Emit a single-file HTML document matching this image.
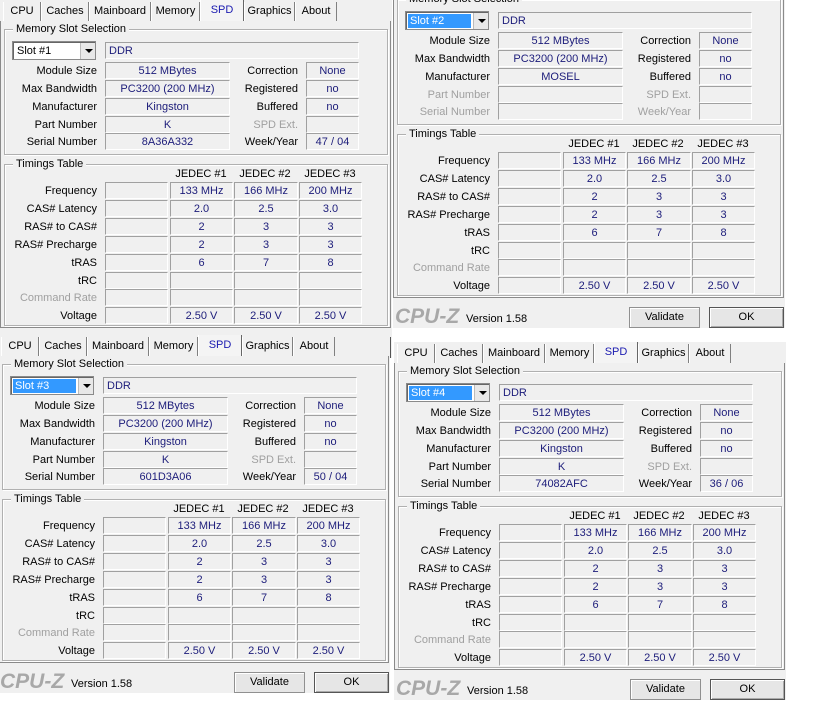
<!DOCTYPE html>
<html><head><meta charset="utf-8">
<style>
*{box-sizing:border-box;margin:0;padding:0}
html,body{width:816px;height:724px;overflow:hidden;background:#fff;font-family:"Liberation Sans",sans-serif;font-size:11px;color:#000}
.p{position:absolute;width:392px;height:358px;background:#f0f0f0}
.p div,.p span{position:absolute}
.tb{left:0;top:0;width:392px;height:21px;background:#f0f0f0}
.t{top:2px;height:19px;line-height:19px;border-left:1px solid #fff;border-right:1px solid #808080;text-align:center;background:#f0f0f0}
.t.s{top:0;height:21px;color:#1a1ab0;background:#f4f4f4;border-left:1px solid #fff;border-right:1px solid #666;line-height:20px}
.frame{left:0;top:20px;width:391px;height:308px;border:1px solid #8a8a8a;border-top:1px solid #fff}
.g{left:4px;width:384px;border:1px solid #b0b0b0;box-shadow:inset 1px 1px 0 #fff,1px 1px 0 #fff}
.gt{left:8px;top:-8px;background:#f0f0f0;padding:0 3px;line-height:15px}
.l{left:0;width:97px;text-align:right;line-height:18px}
.r{left:200px;width:98px;text-align:right;line-height:18px}
.gr{color:#a0a0a0}
.b{height:17px;border-top:1px solid #a0a0a0;border-left:1px solid #a0a0a0;border-bottom:1px solid #fff;border-right:1px solid #fff;text-align:center;color:#1c1c7a;line-height:16px}
.sel{left:12px;top:41px;width:84px;height:19px;border:1px solid #8a8a8a;background:#fff;box-shadow:inset 1px 1px 0 #666}
.sel .v{left:2px;top:2px;width:63px;height:14px;line-height:15px;padding-left:2px}
.sel .v.h{background:#3399ff;color:#fff}
.sel .dd{left:67px;top:1px;width:15px;height:16px;background:#e8e8e8;border-left:1px solid #bbb}
.sel .dd i{position:absolute;left:4px;top:6px;width:0;height:0;border-left:4px solid transparent;border-right:4px solid transparent;border-top:4px solid #000}
.jh{top:167px;width:64px;text-align:center;line-height:14px}
.btn{top:337px;height:21px;border:1px solid #909090;background:#e6e6e6;text-align:center;line-height:18px;box-shadow:inset 1px 1px 0 #fff}
.ok{border:1px solid #555;box-shadow:inset 1px 1px 0 #fff,inset -1px -1px 0 #aaa}
.logo{left:2px;top:335px;font-size:21px;font-weight:bold;font-style:italic;color:#a8a8a8;line-height:24px}
.ver{left:73px;top:342px;line-height:14px}
</style></head><body>

<!-- PANEL 1 -->
<div class="p" style="left:0;top:0">
<div class="frame"></div>
<div class="tb">
<div class="t" style="left:3px;width:38px">CPU</div>
<div class="t" style="left:41px;width:48px">Caches</div>
<div class="t" style="left:89px;width:62px">Mainboard</div>
<div class="t" style="left:151px;width:49px">Memory</div>
<div class="t s" style="left:200px;width:44px">SPD</div>
<div class="t" style="left:244px;width:51px">Graphics</div>
<div class="t" style="left:295px;width:42px">About</div>
</div>
<div class="g" style="top:29px;height:126px"><span class="gt">Memory Slot Selection</span></div>
<div class="sel"><div class="v">Slot #1</div><div class="dd"><i></i></div></div>
<div class="b" style="left:105px;top:42px;width:254px;text-align:left;padding-left:3px">DDR</div>
<span class="l" style="top:62px">Module Size</span><div class="b" style="left:105px;top:62px;width:125px">512 MBytes</div>
<span class="l" style="top:80px">Max Bandwidth</span><div class="b" style="left:105px;top:80px;width:125px">PC3200 (200 MHz)</div>
<span class="l" style="top:98px">Manufacturer</span><div class="b" style="left:105px;top:98px;width:125px">Kingston</div>
<span class="l" style="top:116px">Part Number</span><div class="b" style="left:105px;top:116px;width:125px">K</div>
<span class="l" style="top:133px">Serial Number</span><div class="b" style="left:105px;top:133px;width:125px">8A36A332</div>
<span class="r" style="top:62px">Correction</span><div class="b" style="left:306px;top:62px;width:53px">None</div>
<span class="r" style="top:80px">Registered</span><div class="b" style="left:306px;top:80px;width:53px">no</div>
<span class="r" style="top:98px">Buffered</span><div class="b" style="left:306px;top:98px;width:53px">no</div>
<span class="r gr" style="top:116px">SPD Ext.</span><div class="b" style="left:306px;top:116px;width:53px"></div>
<span class="r" style="top:133px">Week/Year</span><div class="b" style="left:306px;top:133px;width:53px">47 / 04</div>
<div class="g" style="top:164px;height:162px"><span class="gt">Timings Table</span></div>
<span class="jh" style="left:169px">JEDEC #1</span><span class="jh" style="left:233px">JEDEC #2</span><span class="jh" style="left:298px">JEDEC #3</span>
<span class="l" style="top:182px">Frequency</span><div class="b" style="left:105px;top:182px;width:63px"></div><div class="b" style="left:170px;top:182px;width:63px">133 MHz</div><div class="b" style="left:234px;top:182px;width:64px">166 MHz</div><div class="b" style="left:299px;top:182px;width:63px">200 MHz</div>
<span class="l" style="top:200px">CAS# Latency</span><div class="b" style="left:105px;top:200px;width:63px"></div><div class="b" style="left:170px;top:200px;width:63px">2.0</div><div class="b" style="left:234px;top:200px;width:64px">2.5</div><div class="b" style="left:299px;top:200px;width:63px">3.0</div>
<span class="l" style="top:218px">RAS# to CAS#</span><div class="b" style="left:105px;top:218px;width:63px"></div><div class="b" style="left:170px;top:218px;width:63px">2</div><div class="b" style="left:234px;top:218px;width:64px">3</div><div class="b" style="left:299px;top:218px;width:63px">3</div>
<span class="l" style="top:236px">RAS# Precharge</span><div class="b" style="left:105px;top:236px;width:63px"></div><div class="b" style="left:170px;top:236px;width:63px">2</div><div class="b" style="left:234px;top:236px;width:64px">3</div><div class="b" style="left:299px;top:236px;width:63px">3</div>
<span class="l" style="top:254px">tRAS</span><div class="b" style="left:105px;top:254px;width:63px"></div><div class="b" style="left:170px;top:254px;width:63px">6</div><div class="b" style="left:234px;top:254px;width:64px">7</div><div class="b" style="left:299px;top:254px;width:63px">8</div>
<span class="l" style="top:272px">tRC</span><div class="b" style="left:105px;top:272px;width:63px"></div><div class="b" style="left:170px;top:272px;width:63px"></div><div class="b" style="left:234px;top:272px;width:64px"></div><div class="b" style="left:299px;top:272px;width:63px"></div>
<span class="l gr" style="top:289px">Command Rate</span><div class="b" style="left:105px;top:289px;width:63px"></div><div class="b" style="left:170px;top:289px;width:63px"></div><div class="b" style="left:234px;top:289px;width:64px"></div><div class="b" style="left:299px;top:289px;width:63px"></div>
<span class="l" style="top:307px">Voltage</span><div class="b" style="left:105px;top:307px;width:63px"></div><div class="b" style="left:170px;top:307px;width:63px">2.50 V</div><div class="b" style="left:234px;top:307px;width:64px">2.50 V</div><div class="b" style="left:299px;top:307px;width:63px">2.50 V</div>
<span class="logo">CPU-Z</span><span class="ver">Version 1.58</span>
<div class="btn" style="left:236px;width:71px">Validate</div><div class="btn ok" style="left:316px;width:75px">OK</div>
</div>

<!-- PANEL 2 -->
<div class="p" style="left:393px;top:-30px">
<div class="frame"></div>
<div class="tb">
<div class="t" style="left:3px;width:38px">CPU</div>
<div class="t" style="left:41px;width:48px">Caches</div>
<div class="t" style="left:89px;width:62px">Mainboard</div>
<div class="t" style="left:151px;width:49px">Memory</div>
<div class="t s" style="left:200px;width:44px">SPD</div>
<div class="t" style="left:244px;width:51px">Graphics</div>
<div class="t" style="left:295px;width:42px">About</div>
</div>
<div class="g" style="top:29px;height:126px"><span class="gt">Memory Slot Selection</span></div>
<div class="sel"><div class="v h">Slot #2</div><div class="dd"><i></i></div></div>
<div class="b" style="left:105px;top:42px;width:254px;text-align:left;padding-left:3px">DDR</div>
<span class="l" style="top:62px">Module Size</span><div class="b" style="left:105px;top:62px;width:125px">512 MBytes</div>
<span class="l" style="top:80px">Max Bandwidth</span><div class="b" style="left:105px;top:80px;width:125px">PC3200 (200 MHz)</div>
<span class="l" style="top:98px">Manufacturer</span><div class="b" style="left:105px;top:98px;width:125px">MOSEL</div>
<span class="l gr" style="top:116px">Part Number</span><div class="b" style="left:105px;top:116px;width:125px"></div>
<span class="l gr" style="top:133px">Serial Number</span><div class="b" style="left:105px;top:133px;width:125px"></div>
<span class="r" style="top:62px">Correction</span><div class="b" style="left:306px;top:62px;width:53px">None</div>
<span class="r" style="top:80px">Registered</span><div class="b" style="left:306px;top:80px;width:53px">no</div>
<span class="r" style="top:98px">Buffered</span><div class="b" style="left:306px;top:98px;width:53px">no</div>
<span class="r gr" style="top:116px">SPD Ext.</span><div class="b" style="left:306px;top:116px;width:53px"></div>
<span class="r gr" style="top:133px">Week/Year</span><div class="b" style="left:306px;top:133px;width:53px"></div>
<div class="g" style="top:164px;height:162px"><span class="gt">Timings Table</span></div>
<span class="jh" style="left:169px">JEDEC #1</span><span class="jh" style="left:233px">JEDEC #2</span><span class="jh" style="left:298px">JEDEC #3</span>
<span class="l" style="top:182px">Frequency</span><div class="b" style="left:105px;top:182px;width:63px"></div><div class="b" style="left:170px;top:182px;width:63px">133 MHz</div><div class="b" style="left:234px;top:182px;width:64px">166 MHz</div><div class="b" style="left:299px;top:182px;width:63px">200 MHz</div>
<span class="l" style="top:200px">CAS# Latency</span><div class="b" style="left:105px;top:200px;width:63px"></div><div class="b" style="left:170px;top:200px;width:63px">2.0</div><div class="b" style="left:234px;top:200px;width:64px">2.5</div><div class="b" style="left:299px;top:200px;width:63px">3.0</div>
<span class="l" style="top:218px">RAS# to CAS#</span><div class="b" style="left:105px;top:218px;width:63px"></div><div class="b" style="left:170px;top:218px;width:63px">2</div><div class="b" style="left:234px;top:218px;width:64px">3</div><div class="b" style="left:299px;top:218px;width:63px">3</div>
<span class="l" style="top:236px">RAS# Precharge</span><div class="b" style="left:105px;top:236px;width:63px"></div><div class="b" style="left:170px;top:236px;width:63px">2</div><div class="b" style="left:234px;top:236px;width:64px">3</div><div class="b" style="left:299px;top:236px;width:63px">3</div>
<span class="l" style="top:254px">tRAS</span><div class="b" style="left:105px;top:254px;width:63px"></div><div class="b" style="left:170px;top:254px;width:63px">6</div><div class="b" style="left:234px;top:254px;width:64px">7</div><div class="b" style="left:299px;top:254px;width:63px">8</div>
<span class="l" style="top:272px">tRC</span><div class="b" style="left:105px;top:272px;width:63px"></div><div class="b" style="left:170px;top:272px;width:63px"></div><div class="b" style="left:234px;top:272px;width:64px"></div><div class="b" style="left:299px;top:272px;width:63px"></div>
<span class="l gr" style="top:289px">Command Rate</span><div class="b" style="left:105px;top:289px;width:63px"></div><div class="b" style="left:170px;top:289px;width:63px"></div><div class="b" style="left:234px;top:289px;width:64px"></div><div class="b" style="left:299px;top:289px;width:63px"></div>
<span class="l" style="top:307px">Voltage</span><div class="b" style="left:105px;top:307px;width:63px"></div><div class="b" style="left:170px;top:307px;width:63px">2.50 V</div><div class="b" style="left:234px;top:307px;width:64px">2.50 V</div><div class="b" style="left:299px;top:307px;width:63px">2.50 V</div>
<span class="logo">CPU-Z</span><span class="ver">Version 1.58</span>
<div class="btn" style="left:236px;width:71px">Validate</div><div class="btn ok" style="left:316px;width:75px">OK</div>
</div>

<!-- PANEL 3 -->
<div class="p" style="left:-2px;top:335px">
<div class="frame"></div>
<div class="tb">
<div class="t" style="left:3px;width:38px">CPU</div>
<div class="t" style="left:41px;width:48px">Caches</div>
<div class="t" style="left:89px;width:62px">Mainboard</div>
<div class="t" style="left:151px;width:49px">Memory</div>
<div class="t s" style="left:200px;width:44px">SPD</div>
<div class="t" style="left:244px;width:51px">Graphics</div>
<div class="t" style="left:295px;width:42px">About</div>
</div>
<div class="g" style="top:29px;height:126px"><span class="gt">Memory Slot Selection</span></div>
<div class="sel"><div class="v h">Slot #3</div><div class="dd"><i></i></div></div>
<div class="b" style="left:105px;top:42px;width:254px;text-align:left;padding-left:3px">DDR</div>
<span class="l" style="top:62px">Module Size</span><div class="b" style="left:105px;top:62px;width:125px">512 MBytes</div>
<span class="l" style="top:80px">Max Bandwidth</span><div class="b" style="left:105px;top:80px;width:125px">PC3200 (200 MHz)</div>
<span class="l" style="top:98px">Manufacturer</span><div class="b" style="left:105px;top:98px;width:125px">Kingston</div>
<span class="l" style="top:116px">Part Number</span><div class="b" style="left:105px;top:116px;width:125px">K</div>
<span class="l" style="top:133px">Serial Number</span><div class="b" style="left:105px;top:133px;width:125px">601D3A06</div>
<span class="r" style="top:62px">Correction</span><div class="b" style="left:306px;top:62px;width:53px">None</div>
<span class="r" style="top:80px">Registered</span><div class="b" style="left:306px;top:80px;width:53px">no</div>
<span class="r" style="top:98px">Buffered</span><div class="b" style="left:306px;top:98px;width:53px">no</div>
<span class="r gr" style="top:116px">SPD Ext.</span><div class="b" style="left:306px;top:116px;width:53px"></div>
<span class="r" style="top:133px">Week/Year</span><div class="b" style="left:306px;top:133px;width:53px">50 / 04</div>
<div class="g" style="top:164px;height:162px"><span class="gt">Timings Table</span></div>
<span class="jh" style="left:169px">JEDEC #1</span><span class="jh" style="left:233px">JEDEC #2</span><span class="jh" style="left:298px">JEDEC #3</span>
<span class="l" style="top:182px">Frequency</span><div class="b" style="left:105px;top:182px;width:63px"></div><div class="b" style="left:170px;top:182px;width:63px">133 MHz</div><div class="b" style="left:234px;top:182px;width:64px">166 MHz</div><div class="b" style="left:299px;top:182px;width:63px">200 MHz</div>
<span class="l" style="top:200px">CAS# Latency</span><div class="b" style="left:105px;top:200px;width:63px"></div><div class="b" style="left:170px;top:200px;width:63px">2.0</div><div class="b" style="left:234px;top:200px;width:64px">2.5</div><div class="b" style="left:299px;top:200px;width:63px">3.0</div>
<span class="l" style="top:218px">RAS# to CAS#</span><div class="b" style="left:105px;top:218px;width:63px"></div><div class="b" style="left:170px;top:218px;width:63px">2</div><div class="b" style="left:234px;top:218px;width:64px">3</div><div class="b" style="left:299px;top:218px;width:63px">3</div>
<span class="l" style="top:236px">RAS# Precharge</span><div class="b" style="left:105px;top:236px;width:63px"></div><div class="b" style="left:170px;top:236px;width:63px">2</div><div class="b" style="left:234px;top:236px;width:64px">3</div><div class="b" style="left:299px;top:236px;width:63px">3</div>
<span class="l" style="top:254px">tRAS</span><div class="b" style="left:105px;top:254px;width:63px"></div><div class="b" style="left:170px;top:254px;width:63px">6</div><div class="b" style="left:234px;top:254px;width:64px">7</div><div class="b" style="left:299px;top:254px;width:63px">8</div>
<span class="l" style="top:272px">tRC</span><div class="b" style="left:105px;top:272px;width:63px"></div><div class="b" style="left:170px;top:272px;width:63px"></div><div class="b" style="left:234px;top:272px;width:64px"></div><div class="b" style="left:299px;top:272px;width:63px"></div>
<span class="l gr" style="top:289px">Command Rate</span><div class="b" style="left:105px;top:289px;width:63px"></div><div class="b" style="left:170px;top:289px;width:63px"></div><div class="b" style="left:234px;top:289px;width:64px"></div><div class="b" style="left:299px;top:289px;width:63px"></div>
<span class="l" style="top:307px">Voltage</span><div class="b" style="left:105px;top:307px;width:63px"></div><div class="b" style="left:170px;top:307px;width:63px">2.50 V</div><div class="b" style="left:234px;top:307px;width:64px">2.50 V</div><div class="b" style="left:299px;top:307px;width:63px">2.50 V</div>
<span class="logo">CPU-Z</span><span class="ver">Version 1.58</span>
<div class="btn" style="left:236px;width:71px">Validate</div><div class="btn ok" style="left:316px;width:75px">OK</div>
</div>

<!-- PANEL 4 -->
<div class="p" style="left:394px;top:342px">
<div class="frame"></div>
<div class="tb">
<div class="t" style="left:3px;width:38px">CPU</div>
<div class="t" style="left:41px;width:48px">Caches</div>
<div class="t" style="left:89px;width:62px">Mainboard</div>
<div class="t" style="left:151px;width:49px">Memory</div>
<div class="t s" style="left:200px;width:44px">SPD</div>
<div class="t" style="left:244px;width:51px">Graphics</div>
<div class="t" style="left:295px;width:42px">About</div>
</div>
<div class="g" style="top:29px;height:126px"><span class="gt">Memory Slot Selection</span></div>
<div class="sel"><div class="v h">Slot #4</div><div class="dd"><i></i></div></div>
<div class="b" style="left:105px;top:42px;width:254px;text-align:left;padding-left:3px">DDR</div>
<span class="l" style="top:62px">Module Size</span><div class="b" style="left:105px;top:62px;width:125px">512 MBytes</div>
<span class="l" style="top:80px">Max Bandwidth</span><div class="b" style="left:105px;top:80px;width:125px">PC3200 (200 MHz)</div>
<span class="l" style="top:98px">Manufacturer</span><div class="b" style="left:105px;top:98px;width:125px">Kingston</div>
<span class="l" style="top:116px">Part Number</span><div class="b" style="left:105px;top:116px;width:125px">K</div>
<span class="l" style="top:133px">Serial Number</span><div class="b" style="left:105px;top:133px;width:125px">74082AFC</div>
<span class="r" style="top:62px">Correction</span><div class="b" style="left:306px;top:62px;width:53px">None</div>
<span class="r" style="top:80px">Registered</span><div class="b" style="left:306px;top:80px;width:53px">no</div>
<span class="r" style="top:98px">Buffered</span><div class="b" style="left:306px;top:98px;width:53px">no</div>
<span class="r gr" style="top:116px">SPD Ext.</span><div class="b" style="left:306px;top:116px;width:53px"></div>
<span class="r" style="top:133px">Week/Year</span><div class="b" style="left:306px;top:133px;width:53px">36 / 06</div>
<div class="g" style="top:164px;height:162px"><span class="gt">Timings Table</span></div>
<span class="jh" style="left:169px">JEDEC #1</span><span class="jh" style="left:233px">JEDEC #2</span><span class="jh" style="left:298px">JEDEC #3</span>
<span class="l" style="top:182px">Frequency</span><div class="b" style="left:105px;top:182px;width:63px"></div><div class="b" style="left:170px;top:182px;width:63px">133 MHz</div><div class="b" style="left:234px;top:182px;width:64px">166 MHz</div><div class="b" style="left:299px;top:182px;width:63px">200 MHz</div>
<span class="l" style="top:200px">CAS# Latency</span><div class="b" style="left:105px;top:200px;width:63px"></div><div class="b" style="left:170px;top:200px;width:63px">2.0</div><div class="b" style="left:234px;top:200px;width:64px">2.5</div><div class="b" style="left:299px;top:200px;width:63px">3.0</div>
<span class="l" style="top:218px">RAS# to CAS#</span><div class="b" style="left:105px;top:218px;width:63px"></div><div class="b" style="left:170px;top:218px;width:63px">2</div><div class="b" style="left:234px;top:218px;width:64px">3</div><div class="b" style="left:299px;top:218px;width:63px">3</div>
<span class="l" style="top:236px">RAS# Precharge</span><div class="b" style="left:105px;top:236px;width:63px"></div><div class="b" style="left:170px;top:236px;width:63px">2</div><div class="b" style="left:234px;top:236px;width:64px">3</div><div class="b" style="left:299px;top:236px;width:63px">3</div>
<span class="l" style="top:254px">tRAS</span><div class="b" style="left:105px;top:254px;width:63px"></div><div class="b" style="left:170px;top:254px;width:63px">6</div><div class="b" style="left:234px;top:254px;width:64px">7</div><div class="b" style="left:299px;top:254px;width:63px">8</div>
<span class="l" style="top:272px">tRC</span><div class="b" style="left:105px;top:272px;width:63px"></div><div class="b" style="left:170px;top:272px;width:63px"></div><div class="b" style="left:234px;top:272px;width:64px"></div><div class="b" style="left:299px;top:272px;width:63px"></div>
<span class="l gr" style="top:289px">Command Rate</span><div class="b" style="left:105px;top:289px;width:63px"></div><div class="b" style="left:170px;top:289px;width:63px"></div><div class="b" style="left:234px;top:289px;width:64px"></div><div class="b" style="left:299px;top:289px;width:63px"></div>
<span class="l" style="top:307px">Voltage</span><div class="b" style="left:105px;top:307px;width:63px"></div><div class="b" style="left:170px;top:307px;width:63px">2.50 V</div><div class="b" style="left:234px;top:307px;width:64px">2.50 V</div><div class="b" style="left:299px;top:307px;width:63px">2.50 V</div>
<span class="logo">CPU-Z</span><span class="ver">Version 1.58</span>
<div class="btn" style="left:236px;width:71px">Validate</div><div class="btn ok" style="left:316px;width:75px">OK</div>
</div>

</body></html>
